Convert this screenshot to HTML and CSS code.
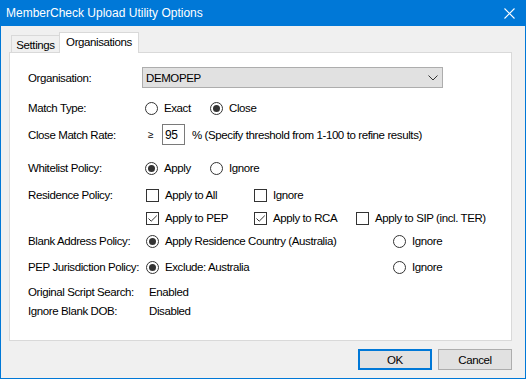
FILE: index.html
```html
<!DOCTYPE html>
<html>
<head>
<meta charset="utf-8">
<link rel="stylesheet" href="styles.css">
</head>
<body>
<div class="window">
  <div class="titlebar">
    <span class="title">MemberCheck Upload Utility Options</span>
    <span class="close"><svg width="11" height="11" viewBox="0 0 11 11"><path d="M0.5 0.5 L10.5 10.5 M10.5 0.5 L0.5 10.5" stroke="#fff" stroke-width="1.1" fill="none"/></svg></span>
  </div>
  <div class="content">
    <div class="tabs">
      <div class="tab tab-settings">Settings</div>
      <div class="tab tab-active">Organisations</div>
    </div>
    <div class="panel">
      <div class="row r1">
        <span class="label">Organisation:</span>
        <div class="select"><span>DEMOPEP</span><svg class="chev" width="10" height="6" viewBox="0 0 10 6"><path d="M0.5 0.5 L5 5 L9.5 0.5" stroke="#333" stroke-width="1" fill="none"/></svg></div>
      </div>
      <div class="row r2">
        <span class="label">Match Type:</span>
        <span class="opt w65"><span class="radio"></span>Exact</span>
        <span class="opt"><span class="radio on"></span>Close</span>
      </div>
      <div class="row r3">
        <span class="label">Close Match Rate:</span>
        <span class="ge">≥</span>
        <span class="num">95</span>
        <span class="hint">% (Specify threshold from 1-100 to refine results)</span>
      </div>
      <div class="row r4">
        <span class="label">Whitelist Policy:</span>
        <span class="opt w65"><span class="radio on"></span>Apply</span>
        <span class="opt"><span class="radio"></span>Ignore</span>
      </div>
      <div class="row r5">
        <span class="label">Residence Policy:</span>
        <span class="opt cb-first w108"><span class="check"></span>Apply to All</span>
        <span class="opt"><span class="check"></span>Ignore</span>
      </div>
      <div class="row r6">
        <span class="label"></span>
        <span class="opt cb-first w108"><span class="check"><svg width="11" height="11" viewBox="0 0 11 11"><path d="M1.5 5.5 L4.2 8.2 L9.8 2.6" stroke="#333" stroke-width="1" fill="none"/></svg></span>Apply to PEP</span>
        <span class="opt w102"><span class="check"><svg width="11" height="11" viewBox="0 0 11 11"><path d="M1.5 5.5 L4.2 8.2 L9.8 2.6" stroke="#333" stroke-width="1" fill="none"/></svg></span>Apply to RCA</span>
        <span class="opt"><span class="check"></span>Apply to SIP (incl. TER)</span>
      </div>
      <div class="row r7">
        <span class="label">Blank Address Policy:</span>
        <span class="opt cb-first w247"><span class="radio on"></span>Apply Residence Country (Australia)</span>
        <span class="opt"><span class="radio"></span>Ignore</span>
      </div>
      <div class="row r8">
        <span class="label">PEP Jurisdiction Policy:</span>
        <span class="opt cb-first w247"><span class="radio on"></span>Exclude: Australia</span>
        <span class="opt"><span class="radio"></span>Ignore</span>
      </div>
      <div class="row r9 short">
        <span class="label">Original Script Search:</span>
        <span class="value">Enabled</span>
      </div>
      <div class="row r10 short">
        <span class="label">Ignore Blank DOB:</span>
        <span class="value">Disabled</span>
      </div>
    </div>
    <div class="footer">
      <button class="btn btn-default">OK</button>
      <button class="btn">Cancel</button>
    </div>
  </div>
</div>
</body>
</html>
```

FILE: styles.css
```css
html, body {
  margin: 0;
  padding: 0;
}
body {
  font-family: "Liberation Sans", Arial, sans-serif;
  font-size: 11.5px;
  letter-spacing: -0.4px;
  color: #000;
}
.window {
  width: 526px;
  height: 379px;
  box-sizing: border-box;
  border: 1px solid #0078d7;
  border-top: none;
  background: #f0f0f0;
  display: flex;
  flex-direction: column;
}
.titlebar {
  height: 26px;
  background: #0078d7;
  color: #fff;
  display: flex;
  align-items: center;
  padding-left: 5px;
  font-size: 12px;
  letter-spacing: 0;
}
.close {
  margin-left: auto;
  width: 11px;
  height: 11px;
  margin-right: 10px;
  display: flex;
}
.content {
  padding: 6px 13px 0 8px;
}
.tabs {
  display: flex;
  align-items: flex-end;
  height: 20px;
  padding-left: 2px;
}
.tab {
  box-sizing: border-box;
  border: 1px solid #d9d9d9;
  border-bottom: none;
  display: flex;
  align-items: center;
  justify-content: center;
  white-space: nowrap;
}
.tab-settings {
  width: 49px;
  height: 17px;
  padding-top: 1px;
}
.tab-active {
  width: 80px;
  height: 21px;
  margin-left: -1px;
  margin-bottom: -1px;
  background: #fff;
  position: relative;
  padding-bottom: 2px;
}
.panel {
  box-sizing: border-box;
  height: 289px;
  background: #fff;
  border: 1px solid #d9d9d9;
  padding-left: 18px;
  display: flex;
  flex-direction: column;
}
.row {
  display: flex;
  align-items: center;
  height: 20px;
  white-space: nowrap;
}
.row.short { height: 16px; }
.r1 { margin-top: 14px; height: 21px; }
.r2 { margin-top: 10px; }
.r3 { margin-top: 6px; height: 21px; }
.r4 { margin-top: 13px; }
.r5 { margin-top: 7px; }
.r6 { margin-top: 3px; }
.r7 { margin-top: 3px; }
.r8 { margin-top: 6px; }
.r9 { margin-top: 7px; }
.r10 { margin-top: 3px; }
.label {
  width: 117px;
  flex: none;
}
.select {
  margin-left: -3px;
  box-sizing: border-box;
  width: 301px;
  height: 21px;
  background: #e1e1e1;
  border: 1px solid #adadad;
  display: flex;
  align-items: center;
  padding-left: 3px;
  padding-right: 4px;
}
.select .chev { margin-left: auto; }
.opt {
  display: flex;
  align-items: center;
  gap: 6px;
  flex: none;
}
.cb-first { margin-left: 1px; }
.w65 { width: 65px; }
.w108 { width: 108px; }
.w102 { width: 102px; }
.w247 { width: 247px; }
.radio {
  box-sizing: border-box;
  width: 13px;
  height: 13px;
  border: 1px solid #333;
  border-radius: 50%;
  display: flex;
  align-items: center;
  justify-content: center;
  background: #fff;
}
.radio.on::after {
  content: "";
  width: 7px;
  height: 7px;
  border-radius: 50%;
  background: #333;
}
.check {
  box-sizing: border-box;
  width: 13px;
  height: 13px;
  border: 1px solid #333;
  background: #fff;
  display: flex;
}
.ge {
  margin-left: 3px;
  width: 14px;
  font-size: 10px;
}
.num {
  box-sizing: border-box;
  width: 23px;
  height: 21px;
  border: 1px solid #7a7a7a;
  padding-left: 2px;
  display: flex;
  align-items: center;
  font-size: 12px;
}
.hint {
  margin-left: 7px;
}
.value {
  margin-left: 4px;
}
.footer {
  display: flex;
  justify-content: flex-end;
  gap: 6px;
  padding-top: 8px;
}
.btn {
  box-sizing: border-box;
  width: 74px;
  height: 21px;
  background: #e1e1e1;
  border: 1px solid #adadad;
  font-family: "Liberation Sans", Arial, sans-serif;
  font-size: 11.5px;
  letter-spacing: -0.4px;
  color: #000;
  padding: 0;
  margin: 0;
}
.btn-default {
  border: 2px solid #0078d7;
}
```
